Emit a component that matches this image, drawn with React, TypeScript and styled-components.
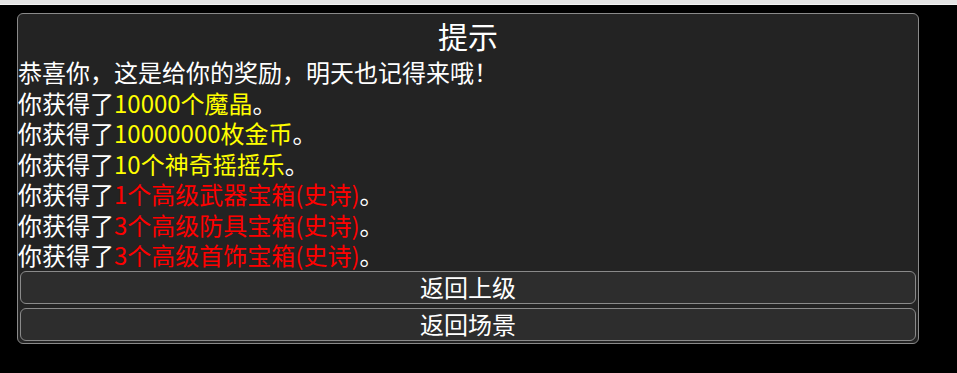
import React from "react";
import styled, { createGlobalStyle } from "styled-components";

const GlobalStyle = createGlobalStyle`
	html, body {
		margin: 0;
		padding: 0;
		background-color: #000;
	}
	body {
		font-family: "Noto Sans CJK SC", "Noto Sans", sans-serif;
		color: #fff;
	}
`;

type Reward = { amount: string; tone: "gold" | "epic" };

const rewards: Reward[] = [
	{ amount: "10000个魔晶", tone: "gold" },
	{ amount: "10000000枚金币", tone: "gold" },
	{ amount: "10个神奇摇摇乐", tone: "gold" },
	{ amount: "1个高级武器宝箱(史诗)", tone: "epic" },
	{ amount: "3个高级防具宝箱(史诗)", tone: "epic" },
	{ amount: "3个高级首饰宝箱(史诗)", tone: "epic" },
];

const App = () => {
	return (
		<>
			<GlobalStyle />
			<TopStrip />
			<Dialog>
				<Title>提示</Title>
				<Line>恭喜你，这是给你的奖励，明天也记得来哦！</Line>
				{rewards.map((r) => (
					<Line key={r.amount}>
						你获得了<Highlight tone={r.tone}>{r.amount}</Highlight>。
					</Line>
				))}
				<Actions>
					<Button>返回上级</Button>
					<Button>返回场景</Button>
				</Actions>
			</Dialog>
		</>
	);
};

export default App;

const TopStrip = styled.div`
	height: 5px;
	width: 100%;
	background-color: #e4e4e4;
	border-bottom: 1px solid #f4f4f4;
	box-sizing: border-box;
`;

const Dialog = styled.div`
	box-sizing: border-box;
	width: 902px;
	margin: 8px 0 0 17px;
	padding: 0 2px 2px 0;
	background-color: #232323;
	border: 1px solid #8a8a8a;
	border-radius: 6px;
	display: flex;
	flex-direction: column;
`;

const Title = styled.div`
	font-size: 30px;
	line-height: 43px;
	text-align: center;
	padding-left: 2px;
`;

const Line = styled.div`
	font-size: 24px;
	line-height: 30.5px;
	white-space: nowrap;
`;

const Highlight = styled.span<{ tone: "gold" | "epic" }>`
	color: ${(p) => (p.tone === "gold" ? "#ffff00" : "#ff0000")};
`;

const Actions = styled.div`
	display: flex;
	flex-direction: column;
	gap: 4px;
	padding-left: 2px;
`;

const Button = styled.button`
	box-sizing: border-box;
	height: 33px;
	width: 100%;
	background-color: #2d2d2d;
	color: #fff;
	border: 1px solid #8a8a8a;
	border-radius: 6px;
	font-family: "Noto Sans CJK SC", "Noto Sans", sans-serif;
	font-size: 24px;
	line-height: 30px;
	padding: 0;
	cursor: pointer;
`;
